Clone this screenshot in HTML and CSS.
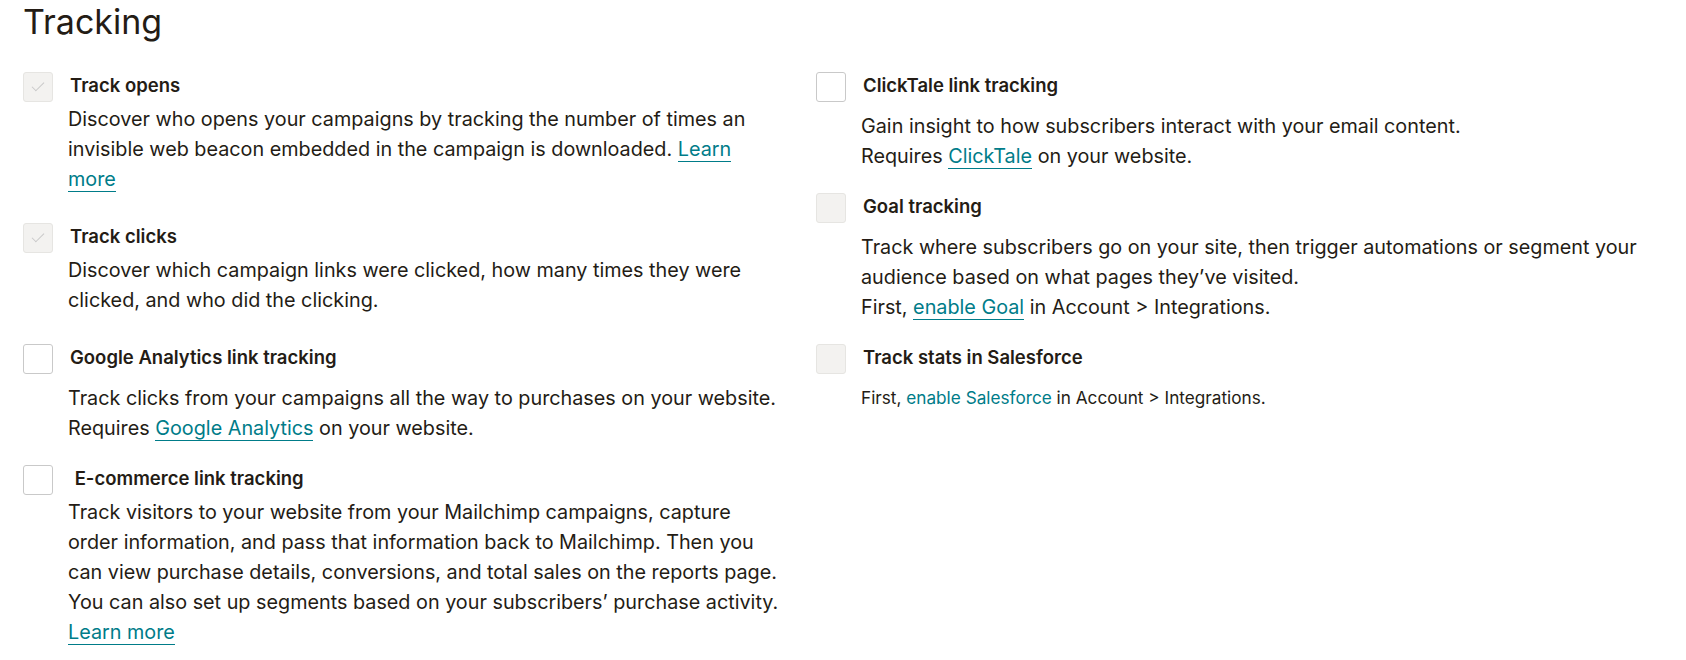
FILE: index.html
```html
<!DOCTYPE html>
<html>
<head>
  <link rel="stylesheet" href="styles.css">
</head>
<body>
  <div class="tracking">
    <h1 class="title">Tracking</h1>
    <div class="columns">
      <div class="column column-left">
        <div class="option option-tight option-wide">
          <span class="box box-disabled"><span class="check"></span></span>
          <div class="option-label">Track opens</div>
          <p class="option-text">Discover who opens your campaigns by tracking the number of times an<br>invisible web beacon embedded in the campaign is downloaded. <a href="#">Learn<br>more</a></p>
        </div>
        <div class="option option-tight option-wide">
          <span class="box box-disabled"><span class="check"></span></span>
          <div class="option-label">Track clicks</div>
          <p class="option-text">Discover which campaign links were clicked, how many times they were<br>clicked, and who did the clicking.</p>
        </div>
        <div class="option">
          <span class="box"></span>
          <div class="option-label">Google Analytics link tracking</div>
          <p class="option-text">Track clicks from your campaigns all the way to purchases on your website.<br>Requires <a href="#">Google Analytics</a> on your website.</p>
        </div>
        <div class="option option-tight">
          <span class="box"></span>
          <div class="option-label">&nbsp;E-commerce link tracking</div>
          <p class="option-text">Track visitors to your website from your Mailchimp campaigns, capture<br>order information, and pass that information back to Mailchimp. Then you<br>can view purchase details, conversions, and total sales on the reports page.<br>You can also set up segments based on your subscribers’ purchase activity.<br><a href="#">Learn more</a></p>
        </div>
      </div>
      <div class="column column-right">
        <div class="option">
          <span class="box"></span>
          <div class="option-label">ClickTale link tracking</div>
          <p class="option-text">Gain insight to how subscribers interact with your email content.<br>Requires <a href="#">ClickTale</a> on your website.</p>
        </div>
        <div class="option">
          <span class="box box-disabled"></span>
          <div class="option-label">Goal tracking</div>
          <p class="option-text">Track where subscribers go on your site, then trigger automations or segment your<br>audience based on what pages they’ve visited.<br>First, <a href="#">enable Goal</a> in Account &gt; Integrations.</p>
        </div>
        <div class="option">
          <span class="box box-disabled"></span>
          <div class="option-label">Track stats in Salesforce</div>
          <p class="option-text option-small">First, <a href="#">enable Salesforce</a> in Account &gt; Integrations.</p>
        </div>
      </div>
    </div>
  </div>
</body>
</html>
```

FILE: styles.css
```css
body {
  margin: 0;
  background: #ffffff;
  color: #241c15;
  font-family: 'Inter', 'Open Sans', sans-serif;
}

.tracking {
  padding: 0 0 0 23px;
}

.title {
  margin: 0;
  padding-top: 2px;
  height: 70px;
  font-size: 34px;
  font-weight: 400;
  line-height: 40px;
}

.columns {
  display: flex;
}

.column-left {
  width: 793px;
  flex: none;
}

.column-right {
  width: 840px;
}

.option {
  display: grid;
  grid-template-columns: 30px 1fr;
  column-gap: 17px;
  margin-bottom: 22px;
}

.option-wide {
  margin-bottom: 29px;
}

.box {
  grid-row: 1;
  width: 28px;
  height: 28px;
  border: 1px solid #c9c9c9;
  border-radius: 3px;
  background: #ffffff;
  display: flex;
  align-items: center;
  justify-content: center;
}

.box-disabled {
  background: #f3f2f0;
  border-color: #e6e5e2;
}

.check {
  width: 11px;
  height: 5px;
  border-left: 1.5px solid #c8c8c8;
  border-bottom: 1.5px solid #c8c8c8;
  transform: translateY(-2px) rotate(-45deg);
}

.option-label {
  grid-row: 1;
  grid-column: 2;
  align-self: start;
  font-size: 18.5px;
  font-weight: 600;
  line-height: 26px;
}

.option-text {
  grid-column: 2;
  margin: 9px 0 0 -2px;
  font-size: 19.8px;
  line-height: 30px;
}

.option-tight .option-text {
  margin-top: 2px;
}

.option-text a {
  color: #007c89;
  text-decoration: none;
  border-bottom: 1px solid #007c89;
}

.option-small {
  font-size: 17.2px;
}

.option-small a {
  border-bottom: none;
}
```
